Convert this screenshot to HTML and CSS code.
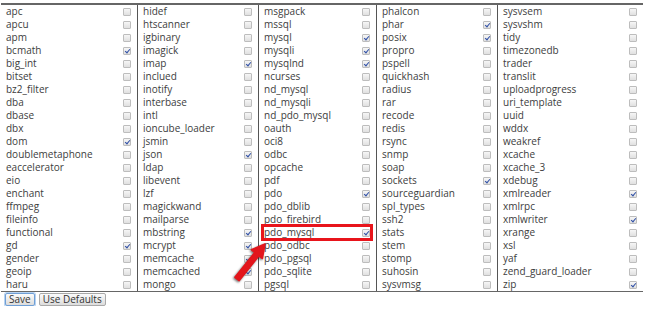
FILE: index.html
```html
<!DOCTYPE html>
<html>
  <head>
    <link rel="stylesheet" href="styles.css">
  </head>
  <body>
    <form class="extensions">
      <div class="grid">
        <!-- column 1 -->
        <div class="col">
          <label class="row">apc <input type="checkbox"></label>
          <label class="row">apcu <input type="checkbox"></label>
          <label class="row">apm <input type="checkbox"></label>
          <label class="row">bcmath <input type="checkbox" checked></label>
          <label class="row">big_int <input type="checkbox"></label>
          <label class="row">bitset <input type="checkbox"></label>
          <label class="row">bz2_filter <input type="checkbox"></label>
          <label class="row">dba <input type="checkbox"></label>
          <label class="row">dbase <input type="checkbox"></label>
          <label class="row">dbx <input type="checkbox"></label>
          <label class="row">dom <input type="checkbox" checked></label>
          <label class="row">doublemetaphone <input type="checkbox"></label>
          <label class="row">eaccelerator <input type="checkbox"></label>
          <label class="row">eio <input type="checkbox"></label>
          <label class="row">enchant <input type="checkbox"></label>
          <label class="row">ffmpeg <input type="checkbox"></label>
          <label class="row">fileinfo <input type="checkbox"></label>
          <label class="row">functional <input type="checkbox"></label>
          <label class="row">gd <input type="checkbox" checked></label>
          <label class="row">gender <input type="checkbox"></label>
          <label class="row">geoip <input type="checkbox"></label>
          <label class="row">haru <input type="checkbox"></label>
        </div>
        <!-- column 2 -->
        <div class="col">
          <label class="row">hidef <input type="checkbox"></label>
          <label class="row">htscanner <input type="checkbox"></label>
          <label class="row">igbinary <input type="checkbox"></label>
          <label class="row">imagick <input type="checkbox"></label>
          <label class="row">imap <input type="checkbox" checked></label>
          <label class="row">inclued <input type="checkbox"></label>
          <label class="row">inotify <input type="checkbox"></label>
          <label class="row">interbase <input type="checkbox"></label>
          <label class="row">intl <input type="checkbox"></label>
          <label class="row">ioncube_loader <input type="checkbox"></label>
          <label class="row">jsmin <input type="checkbox"></label>
          <label class="row">json <input type="checkbox" checked></label>
          <label class="row">ldap <input type="checkbox"></label>
          <label class="row">libevent <input type="checkbox"></label>
          <label class="row">lzf <input type="checkbox"></label>
          <label class="row">magickwand <input type="checkbox"></label>
          <label class="row">mailparse <input type="checkbox"></label>
          <label class="row">mbstring <input type="checkbox" checked></label>
          <label class="row">mcrypt <input type="checkbox" checked></label>
          <label class="row">memcache <input type="checkbox" checked></label>
          <label class="row">memcached <input type="checkbox" checked></label>
          <label class="row">mongo <input type="checkbox"></label>
        </div>
        <!-- column 3 -->
        <div class="col">
          <label class="row">msgpack <input type="checkbox"></label>
          <label class="row">mssql <input type="checkbox"></label>
          <label class="row">mysql <input type="checkbox" checked></label>
          <label class="row">mysqli <input type="checkbox" checked></label>
          <label class="row">mysqlnd <input type="checkbox" checked></label>
          <label class="row">ncurses <input type="checkbox"></label>
          <label class="row">nd_mysql <input type="checkbox"></label>
          <label class="row">nd_mysqli <input type="checkbox"></label>
          <label class="row">nd_pdo_mysql <input type="checkbox"></label>
          <label class="row">oauth <input type="checkbox"></label>
          <label class="row">oci8 <input type="checkbox"></label>
          <label class="row">odbc <input type="checkbox"></label>
          <label class="row">opcache <input type="checkbox"></label>
          <label class="row">pdf <input type="checkbox"></label>
          <label class="row">pdo <input type="checkbox" checked></label>
          <label class="row">pdo_dblib <input type="checkbox"></label>
          <label class="row">pdo_firebird <input type="checkbox"></label>
          <label class="row highlight">pdo_mysql <input type="checkbox" checked></label>
          <label class="row">pdo_odbc <input type="checkbox"></label>
          <label class="row">pdo_pgsql <input type="checkbox"></label>
          <label class="row">pdo_sqlite <input type="checkbox"></label>
          <label class="row">pgsql <input type="checkbox"></label>
        </div>
        <!-- column 4 -->
        <div class="col">
          <label class="row">phalcon <input type="checkbox"></label>
          <label class="row">phar <input type="checkbox" checked></label>
          <label class="row">posix <input type="checkbox" checked></label>
          <label class="row">propro <input type="checkbox"></label>
          <label class="row">pspell <input type="checkbox"></label>
          <label class="row">quickhash <input type="checkbox"></label>
          <label class="row">radius <input type="checkbox"></label>
          <label class="row">rar <input type="checkbox"></label>
          <label class="row">recode <input type="checkbox"></label>
          <label class="row">redis <input type="checkbox"></label>
          <label class="row">rsync <input type="checkbox"></label>
          <label class="row">snmp <input type="checkbox"></label>
          <label class="row">soap <input type="checkbox"></label>
          <label class="row">sockets <input type="checkbox" checked></label>
          <label class="row">sourceguardian <input type="checkbox"></label>
          <label class="row">spl_types <input type="checkbox"></label>
          <label class="row">ssh2 <input type="checkbox"></label>
          <label class="row">stats <input type="checkbox"></label>
          <label class="row">stem <input type="checkbox"></label>
          <label class="row">stomp <input type="checkbox"></label>
          <label class="row">suhosin <input type="checkbox"></label>
          <label class="row">sysvmsg <input type="checkbox"></label>
        </div>
        <!-- column 5 -->
        <div class="col">
          <label class="row">sysvsem <input type="checkbox"></label>
          <label class="row">sysvshm <input type="checkbox"></label>
          <label class="row">tidy <input type="checkbox"></label>
          <label class="row">timezonedb <input type="checkbox"></label>
          <label class="row">trader <input type="checkbox"></label>
          <label class="row">translit <input type="checkbox"></label>
          <label class="row">uploadprogress <input type="checkbox"></label>
          <label class="row">uri_template <input type="checkbox"></label>
          <label class="row">uuid <input type="checkbox"></label>
          <label class="row">wddx <input type="checkbox"></label>
          <label class="row">weakref <input type="checkbox"></label>
          <label class="row">xcache <input type="checkbox"></label>
          <label class="row">xcache_3 <input type="checkbox"></label>
          <label class="row">xdebug <input type="checkbox"></label>
          <label class="row">xmlreader <input type="checkbox" checked></label>
          <label class="row">xmlrpc <input type="checkbox"></label>
          <label class="row">xmlwriter <input type="checkbox" checked></label>
          <label class="row">xrange <input type="checkbox"></label>
          <label class="row">xsl <input type="checkbox"></label>
          <label class="row">yaf <input type="checkbox"></label>
          <label class="row">zend_guard_loader <input type="checkbox"></label>
          <label class="row">zip <input type="checkbox" checked></label>
        </div>

        <!-- annotation arrow -->
        <svg class="arrow" width="40" height="46" viewBox="0 0 40 46">
          <polygon points="35,4 32.4,18.6 29,15.9 9.1,40.7 4.9,37.3 24.8,12.5 21.4,9.8"
                   fill="#e3161c" stroke="#e3161c" stroke-width="1.5" stroke-linejoin="round"/>
        </svg>
      </div>

      <div class="actions">
        <button type="submit" class="btn primary">Save</button>
        <button type="button" class="btn">Use Defaults</button>
      </div>
    </form>
  </body>
</html>
```

FILE: styles.css
```css
body {
  margin: 3px 0 0 1px;
  background: #fff;
  font-family: "Open Sans", "Noto Sans", sans-serif;
  font-size: 10px;
  color: #3d3d3d;
}
.grid {
  position: relative;
  display: grid;
  grid-template-columns: 136px 121px 118px 121px 146px;
  width: 642px;
  border-top: 2px solid #666;
  border-bottom: 1px solid #666;
}
.col {
  display: flex;
  flex-direction: column;
  padding: 0 6px 0 5px;
}
.col + .col {
  border-left: 1px solid #555;
}
.row {
  position: relative;
  display: flex;
  align-items: center;
  justify-content: space-between;
  height: 13px;
  line-height: 13px;
  white-space: nowrap;
}
.row input {
  appearance: none;
  -webkit-appearance: none;
  position: relative;
  width: 8px;
  height: 8px;
  margin: 0;
  border: 1px solid #bdbdbd;
  border-radius: 1px;
  background: linear-gradient(#f6f6f6, #e0e0e0);
}
.row input:checked::after {
  content: "";
  position: absolute;
  left: 2px;
  top: 0;
  width: 2px;
  height: 4px;
  border: solid #2f4fa6;
  border-width: 0 1px 1px 0;
  transform: rotate(40deg);
}
.highlight::after {
  content: "";
  position: absolute;
  top: -2px;
  bottom: -2px;
  left: -3px;
  right: -3px;
  border: 3px solid #e8141b;
}
.arrow {
  position: absolute;
  left: 229px;
  top: 235px;
  filter: drop-shadow(-1px 1px 1px rgba(0, 0, 0, 0.55));
}
.actions {
  display: flex;
  gap: 4px;
  margin-top: 1px;
  padding-left: 4px;
}
.btn {
  height: 13px;
  padding: 0 3px;
  font-family: inherit;
  font-size: 10px;
  line-height: 11px;
  color: #333;
  border: 1px solid #a9a9a9;
  border-radius: 2px;
  background: linear-gradient(#fbfbfb, #dcdcdc);
}
.btn.primary {
  border-color: #6f9fd6;
  box-shadow: 0 0 0 1px #b7d2f0;
}
```
